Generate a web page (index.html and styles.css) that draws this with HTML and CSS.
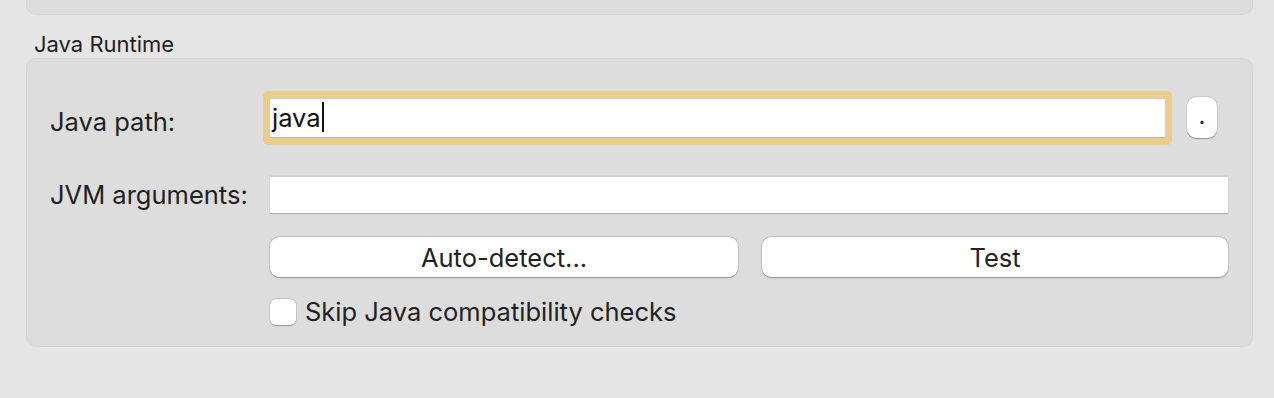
FILE: index.html
```html
<!DOCTYPE html>
<html lang="en">
<head>
  <meta charset="UTF-8">
  <title>Java Runtime</title>
  <meta name="viewport" content="width=device-width, initial-scale=1.0">
  <link rel="stylesheet" href="styles.css">
</head>
<body>
  <div class="top-panel"></div>

  <div class="section-title">Java Runtime</div>
  <div class="panel">
    <div class="row row-path">
      <label class="field-label">Java path:</label>
      <div class="field-wrap">
        <div class="text-field focused">java<span class="caret"></span></div>
        <button type="button" class="small-btn">.</button>
      </div>
    </div>

    <div class="row row-args">
      <label class="field-label">JVM arguments:</label>
      <div class="text-field args"></div>
    </div>

    <div class="row row-buttons">
      <span></span>
      <div class="button-group">
        <button type="button" class="push-btn">Auto-detect...</button>
        <button type="button" class="push-btn">Test</button>
      </div>
    </div>

    <div class="row row-check">
      <span></span>
      <label class="check">
        <span class="check-box"></span>
        Skip Java compatibility checks
      </label>
    </div>
  </div>
</body>
</html>
```

FILE: styles.css
```css
body {
  margin: 0;
  background: #e5e5e5;
  font-family: Inter, "Liberation Sans", sans-serif;
  color: #1f1f1f;
  width: 1274px;
  height: 398px;
  overflow: hidden;
}

.top-panel {
  margin-left: 26px;
  width: 1227px;
  height: 15px;
  background: #dddddd;
  border: 1px solid #d6d6d6;
  border-top: none;
  border-radius: 0 0 10px 10px;
  box-sizing: border-box;
}

.section-title {
  margin: 15px 0 0 34px;
  font-size: 22px;
  line-height: 28px;
  height: 28px;
}

.panel {
  margin-left: 26px;
  width: 1227px;
  height: 289px;
  box-sizing: border-box;
  background: #dddddd;
  border: 1px solid #d6d6d6;
  border-radius: 10px;
  padding: 38px 24px 0 23px;
}

.row {
  display: grid;
  grid-template-columns: 220px 958px;
  align-items: center;
}

.row-path {
  height: 41px;
}

.row-args {
  margin-top: 38px;
  height: 38px;
}

.row-buttons {
  margin-top: 23px;
  height: 40px;
}

.row-check {
  margin-top: 20px;
  height: 26px;
}

.field-label {
  font-size: 25.5px;
  line-height: 30px;
}

.row-path .field-label {
  padding-top: 8px;
}

.field-wrap {
  display: flex;
  align-items: center;
  gap: 22px;
}

.text-field {
  background: #fff;
  height: 38px;
  box-sizing: border-box;
  border-top: 1px solid #cfcfcf;
  border-bottom: 1px solid #b4b4b4;
  box-shadow: 0 0 0 0.5px #d0d0d0;
  font-size: 25.5px;
  line-height: 36px;
  padding-left: 2px;
  color: #111;
}

.text-field.focused {
  width: 895px;
  height: 40px;
  line-height: 38px;
  box-shadow: 0 0 0 7px #e8ce8a;
  border-radius: 1.5px;
}

.caret {
  display: inline-block;
  width: 2px;
  height: 30px;
  background: #111;
  vertical-align: -5px;
  margin-left: 1px;
}

.small-btn {
  width: 30px;
  height: 41px;
  padding: 0;
  border: none;
  border-radius: 9px;
  background: #fff;
  box-shadow: 0 0.5px 1px rgba(0, 0, 0, 0.3), 0 0 0 0.5px rgba(0, 0, 0, 0.12);
  font-family: inherit;
  font-size: 24px;
  line-height: 30px;
  color: #222;
  padding-bottom: 4px;
}

.button-group {
  display: grid;
  grid-template-columns: 468px 466px;
  gap: 24px;
}

.push-btn {
  height: 40px;
  border: none;
  border-radius: 9px;
  background: #fff;
  box-shadow: 0 0.5px 1.5px rgba(0, 0, 0, 0.3), 0 0 0 0.5px rgba(0, 0, 0, 0.12);
  font-family: inherit;
  font-size: 25.5px;
  color: #222;
  padding: 0;
}

.check {
  display: flex;
  align-items: center;
  gap: 9px;
  font-size: 25.5px;
  line-height: 30px;
  color: #222;
}

.check-box {
  width: 26px;
  height: 26px;
  box-sizing: border-box;
  background: #fff;
  border-radius: 6px;
  box-shadow: 0 0.5px 1px rgba(0, 0, 0, 0.25), 0 0 0 0.5px rgba(0, 0, 0, 0.15);
}
```
